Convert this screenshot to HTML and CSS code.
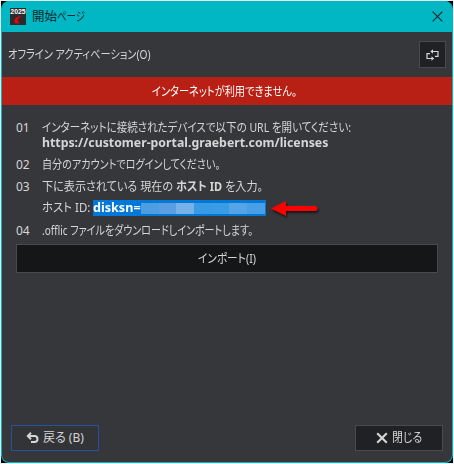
FILE: index.html
```html
<!DOCTYPE html>
<html lang="ja">
<head>
<meta charset="utf-8">
<title>開始ページ</title>
<link rel="stylesheet" href="styles.css">
</head>
<body>
<main class="window">
  <header class="titlebar">
    <svg class="app-icon" width="16" height="17" viewBox="0 0 16 17">
      <rect width="16" height="17" fill="#292b2d"/>
      <path d="M5.500 15.500C2.500 12 5 9.500 11.500 7.500L9 10C7 12 8.500 14 9.500 15.500Z" fill="#e20508"/>
      <text x="0.3" y="5.8" textLength="15.4" lengthAdjust="spacingAndGlyphs">2025</text>
    </svg>
    <h1 class="title"><span class="t">開始</span><span class="t page">ページ</span></h1>
    <svg class="close-icon" width="11" height="11" viewBox="0 0 11 11"><path d="M.7.7l9.600 9.600M10.300.7L.7 10.300" stroke="#10282b" stroke-width="1.2"/></svg>
  </header>
  <section class="toolbar">
    <span class="t offline">オフライン アクティベーション(O)</span>
    <button class="btn refresh">
      <svg width="13" height="12" viewBox="0 0 13 12"><path d="M4 4.700H1V9.500H6M6 2.500H12V7.300H9" fill="none" stroke="#d6d6d6" stroke-width="1.200"/><path d="M7 .3V4.700L4.300 2.500ZM5.500 7.300L8.200 9.500 5.500 11.700Z" fill="#d6d6d6"/></svg>
    </button>
  </section>
  <div class="banner"><span class="t notice">インターネットが利用できません。</span></div>
  <ol class="steps">
    <li class="step step1"><span class="num">01</span><div class="lines"><span class="t open">インターネットに接続されたデバイスで以下の URL を開いてください:</span><b class="t url">https://customer-portal.graebert.com/licenses</b></div></li>
    <li class="step step2"><span class="num">02</span><span class="t login">自分のアカウントでログインしてください。</span></li>
    <li class="step step3"><span class="num">03</span><span class="t enter">下に表示されている 現在の <b>ホスト ID</b> を入力。</span></li>
    <li class="host"><span class="t label">ホスト ID:</span><span class="selection"><b class="t disk">disksn=</b><span class="mosaic"></span></span>
      <svg class="arrow" width="50" height="18" viewBox="0 0 50 18"><path d="M1 8.500L16 1V6H45a2.500 2.500 0 0 1 0 5H16v5Z" fill="#f00"/></svg>
    </li>
    <li class="step step4"><span class="num">04</span><span class="t import">.offlic ファイルをダウンロードしインポートします。</span></li>
  </ol>
  <button class="btn import-btn"><span class="t imp">インポート(I)</span></button>
  <footer class="footer">
    <button class="btn back"><svg width="13" height="12" viewBox="0 0 13 12" fill="none" stroke="#d6d6d6" stroke-width="2"><path d="M2 4h6.500c4 0 4 6 0 6H5M5 .8L1.800 4 5 7.200"/></svg><span class="t">戻る (B)</span></button>
    <button class="btn shut"><svg width="12" height="12" viewBox="0 0 12 12"><path d="M1.200 1.200l9.600 9.600M10.800 1.200L1.200 10.800" stroke="#d6d6d6" stroke-width="2.100"/></svg><span class="t shutt">閉じる</span></button>
  </footer>
</main>
</body>
</html>
```
FILE: styles.css
```css
* { box-sizing: border-box; }
html { overflow: hidden; background: linear-gradient(#000, #000) 1px 1px / 452px 462px no-repeat #e9f2f2; }
body { margin: 1px; font: 12px/16px "Noto Sans", "Noto Sans CJK JP", sans-serif; color: #d6d6d6; }
.window { width: 452px; height: 462px; border: 1px solid #00b7c3; border-top: 0; border-radius: 8px; overflow: hidden; background: #36373b; display: flex; flex-direction: column; }

/* Proportional kana, condensed per run */
.t { display: inline-block; white-space: nowrap; font-feature-settings: "palt"; transform-origin: 0 50%; }
.page { transform: scaleX(.76); }
.offline { transform: scaleX(.85); }
.notice { transform: scaleX(.85); }
.open { transform: scaleX(.876); }
.url { transform: scaleX(1.025); }
.login { transform: scaleX(.84); }
.enter { transform: scaleX(.925); }
.import { transform: scaleX(.835); }
.imp { transform: scaleX(.89); }
.shutt { transform: scaleX(.91); }

.titlebar { height: 31px; flex: none; background: #00b7c3; display: flex; align-items: center; padding: 0 9px 0 8px; }
.app-icon text { font: bold 6.5px "Liberation Sans", sans-serif; fill: #fff; }
.title { display: flex; margin: 0 0 0 6px; font-size: 12.5px; font-weight: 400; color: #10282b; }
.close-icon { margin-left: auto; }
.toolbar { height: 45px; flex: none; display: flex; align-items: center; justify-content: space-between; padding: 0 6px; }
.btn { display: flex; align-items: center; justify-content: center; padding: 0; font: inherit; color: inherit; background: #202124; border: 1px solid #4a4a4c; border-radius: 0; }
.refresh { width: 27px; height: 27px; }
.banner { height: 28px; flex: none; background: #b92015; color: #fff; padding: 7px 0 0 150px; }

.steps { list-style: none; margin: 0; padding: 15px 0 0 14px; height: 139px; flex: none; }
.step { display: flex; }
.num { width: 26px; flex: none; }
.step1 { height: 37px; }
.lines { display: grid; grid-template-rows: 15px 15px; width: 320px; }
.lines .t { justify-self: start; line-height: 15px; }
.step2 { height: 22px; }
.step3 { height: 21px; }
.host { display: flex; height: 23px; padding-left: 26px; }
.label { width: 51px; transform: scaleX(.95); }
.selection { display: flex; width: 173px; height: 16px; background: #0078d7; color: #fff; }
.disk { width: 48px; line-height: 16px; transform: scaleX(1.05); }
.mosaic { width: 124px; height: 11px; margin-top: 3px; background: linear-gradient(90deg, #4c9de2 18px, #5b9ee2 18px 35px, #78b0e8 35px 53px, #389be6 53px 71px, #3b9ce6 71px 88px, #55a5e6 88px 106px, #489fe5 106px); }
.arrow { margin-left: 4px; filter: drop-shadow(1px 2px 1px #0009); }
.import-btn { height: 29px; width: 422px; margin-left: 14px; background: #151618; justify-content: flex-start; padding-left: 181px; flex: none; }

.footer { margin-top: auto; display: flex; justify-content: space-between; padding: 0 9px 11px; }
.footer .btn { width: 88px; height: 26px; gap: 4px; justify-content: flex-start; padding-left: 14px; }
.footer .back { background: #333438; border-color: #2850a0; }
.footer .shut { padding-left: 20px; }
```
